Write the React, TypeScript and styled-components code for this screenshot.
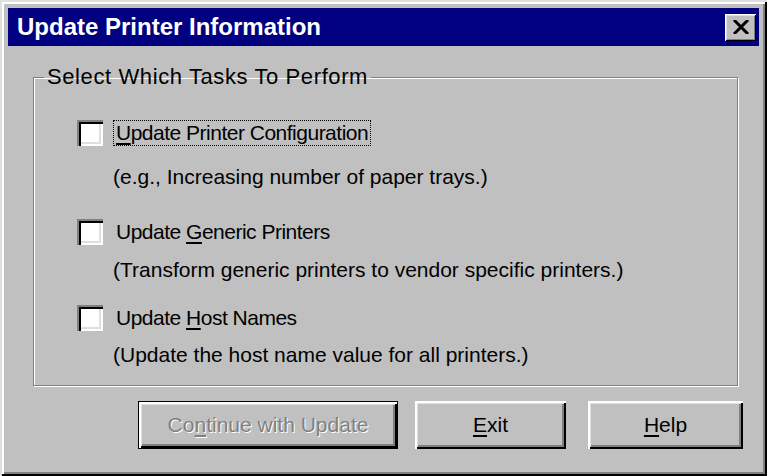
import React from 'react'
import styled, { createGlobalStyle } from 'styled-components'

const GlobalStyle = createGlobalStyle`
  html, body {
    margin: 0;
    padding: 0;
    background: #c0c0c0;
  }
  body {
    font-family: "Liberation Sans", Arial, sans-serif;
  }
`

interface Task {
  id: string
  before: string
  key: string
  after: string
  hint: string
  top: number
  hintGap: number
  focused?: boolean
}

const tasks: Task[] = [
  {
    id: 'config',
    before: '',
    key: 'U',
    after: 'pdate Printer Configuration',
    hint: '(e.g., Increasing number of paper trays.)',
    top: 31,
    hintGap: 18,
    focused: true,
  },
  {
    id: 'generic',
    before: 'Update ',
    key: 'G',
    after: 'eneric Printers',
    hint: '(Transform generic printers to vendor specific printers.)',
    top: 29,
    hintGap: 12,
  },
  {
    id: 'host',
    before: 'Update ',
    key: 'H',
    after: 'ost Names',
    hint: '(Update the host name value for all printers.)',
    top: 22,
    hintGap: 11,
  },
]

const CloseIcon = () => (
  <svg width="16" height="14" viewBox="0 0 16 14" fill="none" xmlns="http://www.w3.org/2000/svg">
    <path d="M2 1L14 13M14 1L2 13" stroke="#000" strokeWidth="3" strokeLinecap="square" />
  </svg>
)

const App = () => {
  return (
    <>
      <GlobalStyle />
      <Window>
        <TitleBar>
          <Title>Update Printer Information</Title>
          <CloseButton aria-label="Close">
            <CloseIcon />
          </CloseButton>
        </TitleBar>

        <Body>
          <Group>
            <Legend>Select Which Tasks To Perform</Legend>
            <TaskList>
              {tasks.map((task) => (
                <TaskRow key={task.id} $top={task.top}>
                  <Box />
                  <TaskText>
                    <TaskLabel $focused={task.focused}>
                      {task.before}
                      <Key>{task.key}</Key>
                      {task.after}
                    </TaskLabel>
                    <Hint $gap={task.hintGap}>{task.hint}</Hint>
                  </TaskText>
                </TaskRow>
              ))}
            </TaskList>
          </Group>

          <Buttons>
            <Button $width={260} $space={17} $default disabled>
              Co<Key>n</Key>tinue with Update
            </Button>
            <Button $width={151} $space={22}>
              <Key>E</Key>xit
            </Button>
            <Button $width={155}>
              <Key>H</Key>elp
            </Button>
          </Buttons>
        </Body>
      </Window>
    </>
  )
}

export default App

const Window = styled.div`
  width: 767px;
  height: 476px;
  box-sizing: border-box;
  padding: 8px 8px 0;
  background: #c0c0c0;
  box-shadow:
    inset 2px 2px 0 #dfdfdf,
    inset -2px -2px 0 #000,
    inset 4px 4px 0 #fff,
    inset -4px -4px 0 #808080;
  display: flex;
  flex-direction: column;
`

const TitleBar = styled.div`
  height: 38px;
  background: #000080;
  display: flex;
  align-items: center;
  justify-content: space-between;
  padding: 0 3px 0 9px;
`

const Title = styled.h1`
  margin: 0;
  color: #fff;
  font-size: 24px;
  font-weight: bold;
`

const CloseButton = styled.button`
  width: 31px;
  height: 27px;
  padding: 0;
  border: none;
  background: #c0c0c0;
  display: flex;
  align-items: center;
  justify-content: center;
  box-shadow:
    inset 1px 1px 0 #fff,
    inset -1px -1px 0 #000,
    inset 2px 2px 0 #dfdfdf,
    inset -2px -2px 0 #808080;
`

const Body = styled.div`
  flex: 1;
  display: flex;
  flex-direction: column;
  padding: 19px 16px 0 25px;
`

const Group = styled.fieldset`
  margin: 0 5px 0 0;
  padding: 0 0 17px;
  border: 1px solid #808080;
  box-shadow: 1px 1px 0 #fff, inset 1px 1px 0 #fff;
  min-width: 0;
`

const Legend = styled.legend`
  margin-left: 10px;
  padding: 0 3px;
  font-size: 22px;
  line-height: 24px;
  letter-spacing: 0.6px;
  color: #000;
`

const TaskList = styled.div`
  padding-left: 43px;
`

const TaskRow = styled.div<{ $top: number }>`
  display: flex;
  align-items: flex-start;
  gap: 10px;
  margin-top: ${(p) => p.$top}px;
`

const Box = styled.span`
  flex: none;
  width: 26px;
  height: 26px;
  box-sizing: border-box;
  background: #fff;
  box-shadow:
    inset 2px 2px 0 #808080,
    inset 4px 4px 0 #000,
    inset -2px -2px 0 #fff,
    inset -4px -4px 0 #dfdfdf;
`

const TaskText = styled.div`
  display: flex;
  flex-direction: column;
  align-items: flex-start;
  font-size: 21px;
  line-height: 26px;
  color: #000;
`

const TaskLabel = styled.span<{ $focused?: boolean }>`
  padding: 0 2px 0 2px;
  border: 1px dotted ${(p) => (p.$focused ? '#000' : 'transparent')};
  line-height: 24px;
  letter-spacing: -0.5px;
`

const Hint = styled.span<{ $gap: number }>`
  margin-top: ${(p) => p.$gap}px;
`

const Key = styled.span`
  text-decoration: underline;
  text-underline-offset: 3px;
  text-decoration-thickness: 2px;
`

const Buttons = styled.div`
  display: flex;
  justify-content: flex-end;
  margin-top: 15px;
`

const Button = styled.button<{ $width: number; $space?: number; $default?: boolean }>`
  width: ${(p) => p.$width}px;
  height: 48px;
  margin-right: ${(p) => p.$space ?? 0}px;
  padding: 0;
  border: ${(p) => (p.$default ? '1px solid #000' : 'none')};
  background: #c0c0c0;
  font-family: "Liberation Sans", Arial, sans-serif;
  font-size: 21px;
  color: #000;
  box-shadow:
    inset 2px 2px 0 #fff,
    inset -2px -2px 0 #000,
    inset 3px 3px 0 #dfdfdf,
    inset -4px -4px 0 #808080;

  &:disabled {
    color: #808080;
    text-shadow: 1px 1px 0 #fff;
  }
`
